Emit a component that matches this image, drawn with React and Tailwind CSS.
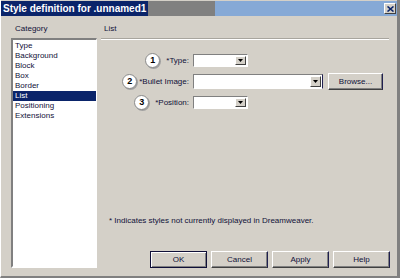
const categories = [
  "Type",
  "Background",
  "Block",
  "Box",
  "Border",
  "List",
  "Positioning",
  "Extensions",
];

const font = { fontFamily: '"Liberation Sans", Arial, sans-serif' };

const ArrowBtn = () => (
  <div className="flex h-full w-[11px] items-center justify-center border border-t-white border-l-white border-r-[#404040] border-b-[#404040] bg-[#d4d0c8]">
    <svg width="5" height="3" viewBox="0 0 5 3">
      <path d="M0 0h5L2.5 3z" fill="#000" />
    </svg>
  </div>
);

const Select = ({ width }) => (
  <div
    className={`flex h-[13px] ${width} justify-end border border-t-[#808080] border-l-[#808080] border-r-white border-b-white bg-white p-[1px]`}
  >
    <ArrowBtn />
  </div>
);

const Num = ({ n }) => (
  <div className="flex h-[15px] w-[15px] items-center justify-center rounded-full border border-[#8a8a8a] bg-white text-[9px] font-bold leading-none text-black shadow-[1px_1px_0_#a0a0a0]">
    {n}
  </div>
);

const Btn = ({ children, primary }) => (
  <div
    className={`flex h-[17px] w-[57px] items-center justify-center text-[8px] text-[#101038] ${
      primary
        ? "border border-[#101038] shadow-[inset_1px_1px_#fff,inset_-1px_-1px_#808080]"
        : "border border-t-white border-l-white border-r-[#202050] border-b-[#404040] shadow-[inset_-1px_-1px_#808080]"
    }`}
  >
    {children}
  </div>
);

export default function App() {
  return (
    <div
      className="flex h-[278px] w-[400px] flex-col overflow-hidden border-l border-l-white border-b-2 border-b-[#808080] border-r-[3px] border-r-[#808080] bg-[#d4d0c8]"
      style={font}
    >
      {/* title bar */}
      <div className="mt-[1px] flex h-[15px]">
        <div className="flex w-[147px] items-center bg-[#0a246a] pl-[2px] text-[10px] font-bold text-white">
          Style definition for .unnamed1
        </div>
        <div className="w-[67px] bg-[#808080]" />
        <div className="flex flex-1 items-start justify-end bg-[#86a9d6] pr-[1px] pt-[2px]">
          <div className="flex h-[11px] w-[12px] items-center justify-center border border-t-white border-l-white border-r-[#404040] border-b-[#404040] bg-[#d4d0c8]">
            <svg width="7" height="6" viewBox="0 0 7 6">
              <path d="M0.5 0.5l6 5M6.5 0.5l-6 5" stroke="#0a246a" strokeWidth="1.6" />
            </svg>
          </div>
        </div>
      </div>

      {/* body */}
      <div className="flex flex-1 pb-[8px]">
        <div className="flex w-[100px] flex-col pl-[10px] pr-[4px] pt-[8px]">
          <div className="h-[10px] pl-[4px] text-[8px] leading-[10px] text-[#101038]">Category</div>
          <div className="mt-[4px] flex-1 border-l-2 border-t-2 border-r border-b-2 border-l-[#808080] border-t-[#808080] border-r-white border-b-white bg-white pt-[1px]">
            {categories.map((c) => (
              <div
                key={c}
                className={`h-[10px] pl-[2px] text-[8px] leading-[10px] ${
                  c === "List" ? "bg-[#0a246a] text-white" : "text-[#101038]"
                }`}
              >
                {c}
              </div>
            ))}
          </div>
        </div>

        <div className="flex flex-1 flex-col pr-[6px] pt-[8px]">
          <div className="h-[10px] pl-[3px] text-[8px] leading-[10px] text-[#101038]">List</div>
          <div className="mr-[2px] mt-[4px] h-[2px] border-t border-t-[#a8a59e] border-b border-b-white" />

          <div className="mt-[12px] flex flex-col gap-[4px]">
            <div className="flex h-[17px] items-center">
              <div className="flex w-[92px] items-center justify-end gap-[6px] pr-[4px] text-[8px] text-[#101038]">
                <Num n="1" />
                <span>*Type:</span>
              </div>
              <Select width="w-[55px]" />
            </div>
            <div className="flex h-[17px] items-center">
              <div className="flex w-[92px] items-center justify-end gap-[2px] pr-[4px] text-[8px] text-[#101038]">
                <Num n="2" />
                <span>*Bullet Image:</span>
              </div>
              <div className="flex h-[15px] w-[130px] justify-end border border-t-[#808080] border-l-[#808080] border-r-[#202050] border-b-white bg-white p-[1px]">
                <ArrowBtn />
              </div>
              <div className="ml-[5px] flex h-[17px] w-[55px] items-center justify-center border border-t-white border-l-white border-r-[#202050] border-b-[#404040] text-[8px] text-[#101038] shadow-[inset_-1px_-1px_#808080]">
                Browse...
              </div>
            </div>
            <div className="flex h-[17px] items-center">
              <div className="flex w-[92px] items-center justify-end gap-[6px] pr-[4px] text-[8px] text-[#101038]">
                <Num n="3" />
                <span>*Position:</span>
              </div>
              <Select width="w-[55px]" />
            </div>
          </div>

          <div className="mb-[25px] mt-auto pl-[8px] text-[8px] leading-[10px] text-[#101038]">
            * Indicates styles not currently displayed in Dreamweaver.
          </div>

          <div className="flex justify-end gap-[4px] pr-[1px]">
            <Btn primary>OK</Btn>
            <Btn>Cancel</Btn>
            <Btn>Apply</Btn>
            <Btn>Help</Btn>
          </div>
        </div>
      </div>
    </div>
  );
}
